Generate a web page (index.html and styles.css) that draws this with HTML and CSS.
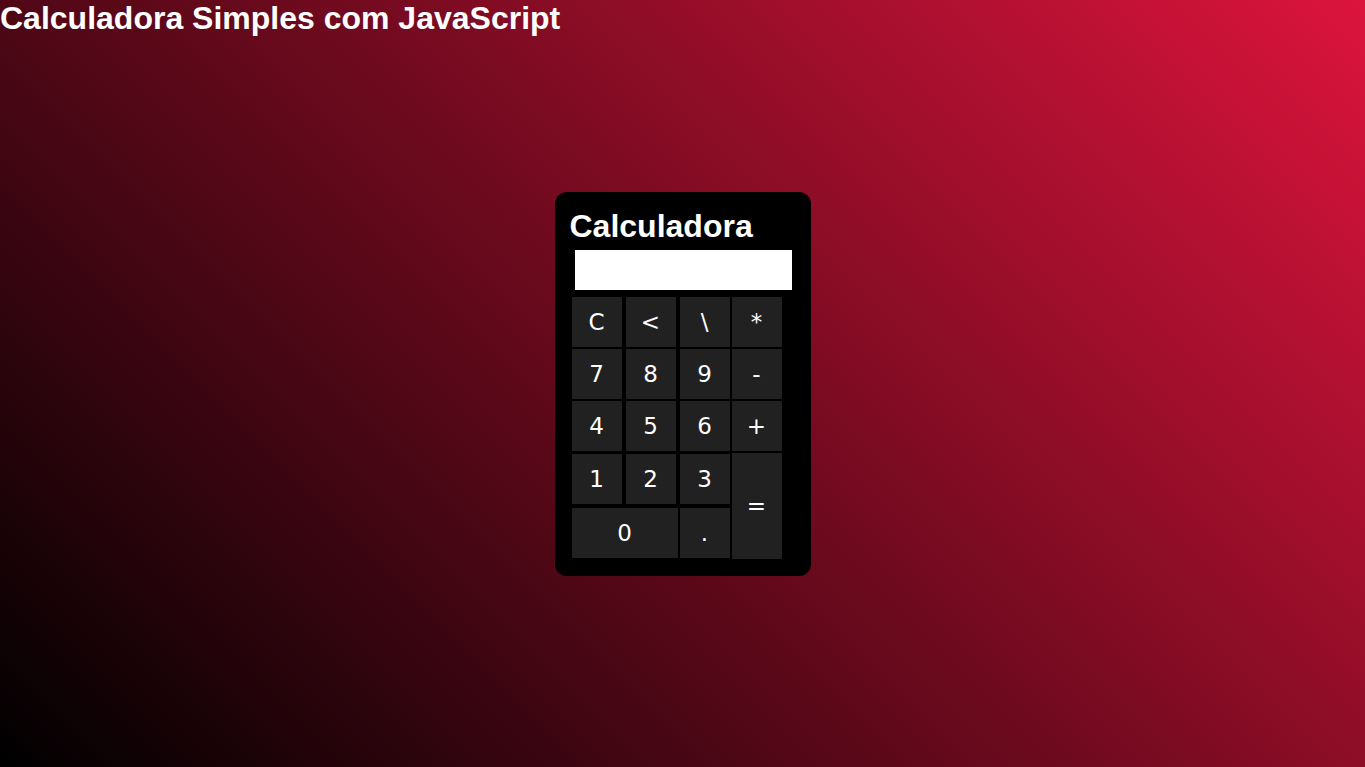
FILE: index.html
```html
<!DOCTYPE html>
<html lang="pt">
<head>
<meta charset="utf-8">
<title>Calculadora Simples com JavaScript</title>
<link rel="stylesheet" href="styles.css">
</head>
<body>
<h1 class="page-title">Calculadora Simples com JavaScript</h1>
<div class="calc">
  <h2 class="calc-title">Calculadora</h2>
  <input class="display" type="text">
  <div class="keys">
    <button class="key">C</button>
    <button class="key">&lt;</button>
    <button class="key">\</button>
    <button class="key">*</button>
    <button class="key">7</button>
    <button class="key">8</button>
    <button class="key">9</button>
    <button class="key">-</button>
    <button class="key">4</button>
    <button class="key">5</button>
    <button class="key">6</button>
    <button class="key">+</button>
    <button class="key row4">1</button>
    <button class="key row4">2</button>
    <button class="key row4">3</button>
    <button class="key equals">=</button>
    <button class="key zero">0</button>
    <button class="key dot">.</button>
  </div>
</div>
</body>
</html>
```
FILE: styles.css
```css
html, body {
  margin: 0;
  height: 100%;
}
body {
  display: grid;
  grid-template: 1fr / 1fr;
  background: linear-gradient(45deg, #000000 0%, #dc143c 100%);
  font-family: "Liberation Sans", Arial, sans-serif;
  color: #fff;
}
.page-title {
  grid-area: 1 / 1;
  align-self: start;
  justify-self: start;
  margin: 0;
  font-size: 32px;
  line-height: 37px;
  font-weight: bold;
}
.calc {
  grid-area: 1 / 1;
  place-self: center;
  box-sizing: border-box;
  width: 256px;
  height: 384px;
  background: #000;
  border-radius: 12px;
  padding: 16px 29px 16px 17px;
  display: flex;
  flex-direction: column;
}
.calc-title {
  margin: 0 0 0 -2px;
  font-size: 32px;
  line-height: 37px;
  font-weight: bold;
  flex: none;
}
.display {
  flex: none;
  box-sizing: border-box;
  width: 217px;
  height: 40px;
  margin: 5px 0 0 3px;
  border: none;
  padding: 0;
  background: #fff;
}
.keys {
  flex: none;
  margin-top: 7px;
  display: grid;
  grid-template-columns: 54px 54px 52px 50px;
  grid-template-rows: 52px 52px 52px 54px 52px;
}
.key {
  width: 50px;
  height: 50px;
  border: none;
  padding: 0;
  background: #212121;
  color: #fff;
  font-family: "DejaVu Sans", Tahoma, sans-serif;
  font-size: 23px;
}
.row4 {
  margin-top: 1px;
}
.equals {
  grid-column: 4;
  grid-row: 4 / span 2;
  height: 106px;
}
.zero {
  grid-column: 1 / span 2;
  grid-row: 5;
  width: 106px;
  margin-top: 1px;
}
.dot {
  grid-column: 3;
  grid-row: 5;
  margin-top: 1px;
}
```
